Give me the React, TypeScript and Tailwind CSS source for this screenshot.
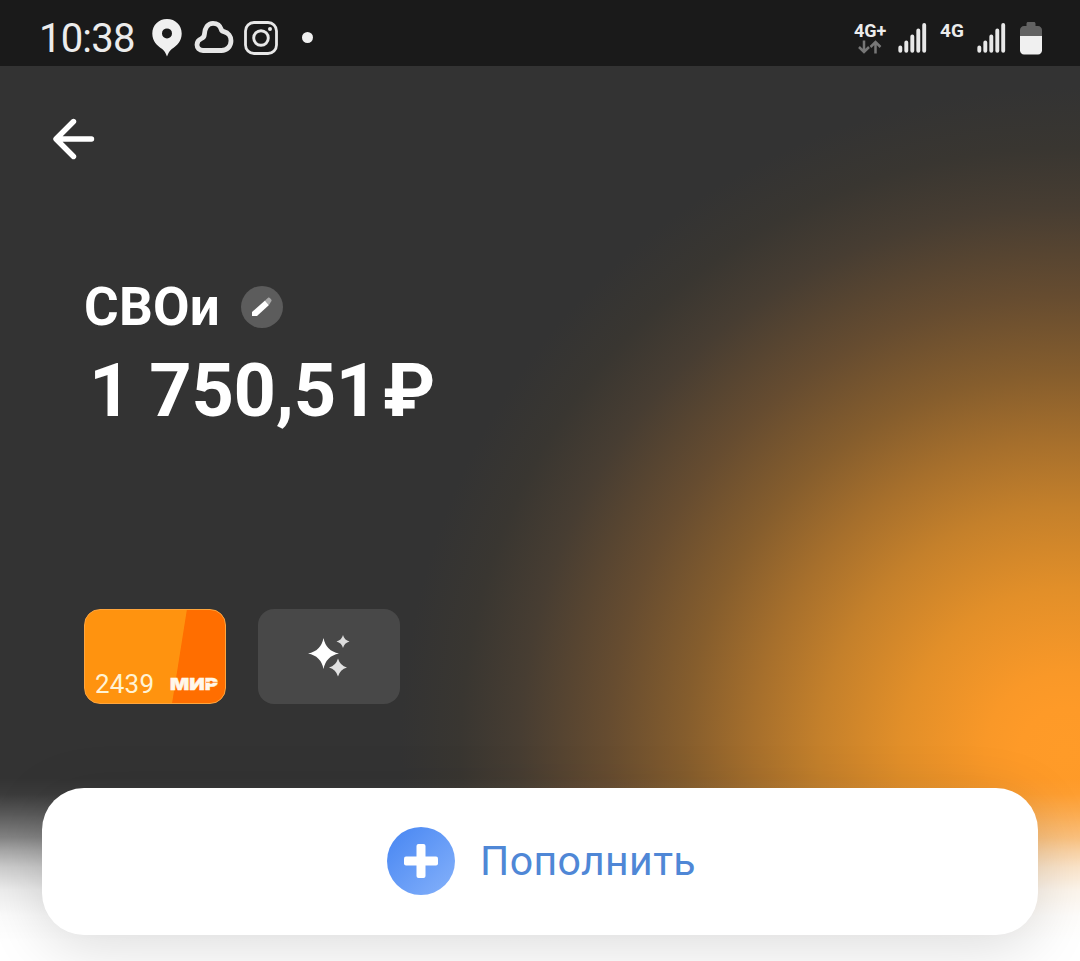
function StatusBar() {
  return (
    <div className="flex h-[66px] items-center justify-between bg-[#1a1a1a] pl-[39px] pr-[38px] text-[#ececec]">
      <div className="flex h-full items-center">
        <span className="mt-[11px] w-[113px] text-[40px] leading-none tracking-[-0.8px]">10:38</span>
        <svg className="mt-[10px]" width="30" height="38" viewBox="0 0 30 38" fill="none">
          <path
            d="M15 0C6.500 0 .3 6.300.3 14.400c0 8 4.900 12.200 9.900 15.600 2.300 1.800 3.300 4 4.800 7.500 1.500-3.500 2.500-5.700 4.800-7.500 5-3.400 9.900-7.600 9.900-15.600C29.700 6.300 23.500 0 15 0Zm0 19.400a5 5 0 1 1 0-10 5 5 0 0 1 0 10Z"
            fill="#f0f0f0"
            fillRule="evenodd"
          />
        </svg>
        <svg className="ml-[12px] mt-[8px]" width="41" height="34" viewBox="0 0 41 34" fill="none">
          <path
            d="M9 30.500C5.200 30.500 3 27.800 3 24.800c0-3 1.700-5.100 4.400-6.200 2.100-.8 2.800-1.900 3-4.200C10.900 7.500 14 3.300 19 3.300c4.300 0 7.200 2.400 8.300 6.200.4 1.400 1.200 1.900 2.600 2.200 4.400 1.100 7.100 4.700 7.100 9.100 0 5.600-4.100 9.700-9.500 9.700H9Z"
            stroke="#e6e6e6"
            strokeWidth="4.800"
            strokeLinejoin="round"
          />
        </svg>
        <svg className="ml-[9px] mt-[10px]" width="34" height="34" viewBox="0 0 34 34" fill="none" stroke="#e8e8e8">
          <rect x="1.500" y="1.500" width="31" height="31" rx="8.500" strokeWidth="2.800" />
          <circle cx="17" cy="17" r="7.300" strokeWidth="2.900" />
          <circle cx="26" cy="8" r="2" fill="#e8e8e8" stroke="none" />
        </svg>
        <span className="ml-[24px] mt-[9px] h-[11px] w-[11px] rounded-full bg-[#f0f0f0]" />
      </div>
      <div className="flex h-full items-start">
        <div className="flex w-[44px] flex-col pt-[22px]">
          <span className="text-[18px] font-bold leading-[18px]">4G+</span>
          <svg className="ml-[4px]" width="24" height="14" viewBox="0 0 24 14" fill="none" stroke="#777" strokeWidth="2.500">
            <path d="M6 0.500v11.500M1 7l5 5 5-5M17.500 13.500V2M12.500 7l5-5 5 5" />
          </svg>
        </div>
        <SignalBars />
        <span className="ml-[13px] mt-[20px] w-[26px] text-[19px] font-bold leading-[21px]">4G</span>
        <SignalBars className="ml-[11px]" />
        <svg className="ml-[14px] mt-[22px]" width="22" height="33" viewBox="0 0 22 33">
          <path d="M6.500 1.500c0-.8.7-1.500 1.500-1.500h6c.8 0 1.500.7 1.500 1.500V4H18c2.200 0 4 1.800 4 4v6.500H0V8c0-2.200 1.800-4 4-4h2.500V1.500Z" fill="#626262" />
          <path d="M0 14h22v14.500c0 2.200-1.800 4-4 4H4c-2.200 0-4-1.800-4-4V14Z" fill="#f0f0f0" />
        </svg>
      </div>
    </div>
  )
}

function SignalBars({ className = "" }: { className?: string }) {
  return (
    <svg className={`mt-[23px] ${className}`} width="29" height="30" viewBox="0 0 29 30" stroke="#e8e8e8" strokeWidth="3.900" strokeLinecap="round">
      <path d="M2.300 24.500v3.200M8.300 19.500v8.200M14.300 13.500v14.200M20.300 7.500v20.200M26.200 2v25.700" />
    </svg>
  )
}

function BankCard() {
  return (
    <div className="flex h-[95px] w-[142px] items-end justify-between rounded-[16px] border border-[#ffa53d] bg-[linear-gradient(99deg,#ff930f_65.500%,#ff6e00_66.100%)] pb-[6px] pl-[10px] pr-[6px]">
      <span className="text-[26px] leading-[26px] tracking-[0.200px] text-[#fff3d5]">2439</span>
      <svg className="overflow-visible" width="49" height="26" viewBox="0 0 49 26">
        <text x="0" y="19" textLength="48" lengthAdjust="spacingAndGlyphs" fontFamily="Inter, sans-serif" fontSize="16.500" fontWeight="900" fill="#fff7ea" stroke="#fff7ea" strokeWidth="0.400">
          МИР
        </text>
        <path d="M36 11.300h12" stroke="#ff7a0a" strokeWidth="0.800" />
      </svg>
    </div>
  )
}

function SparkleTile() {
  return (
    <div className="flex h-[95px] w-[142px] items-center justify-center rounded-[16px] bg-[#484848]">
      <svg className="-mt-[2px]" width="42" height="42" viewBox="0 0 42 42">
        <path d="M15.500 3Q18 16 31 18.500 18 21 15.500 34 13 21 0 18.500 13 16 15.500 3Z" fill="#fff" />
        <path d="M35 0Q36.300 5.200 41.500 6.500 36.300 7.800 35 13 33.700 7.800 28.500 6.500 33.700 5.200 35 0Z" fill="#ddd" />
        <path d="M30 23.500Q32 30.500 39 32.500 32 34.500 30 41.500 28 34.500 21 32.500 28 30.500 30 23.500Z" fill="#e2e2e2" />
      </svg>
    </div>
  )
}

export default function App() {
  return (
    <div className="flex h-[961px] w-[1080px] flex-col overflow-hidden bg-[#333] font-['Roboto',sans-serif] text-white">
      <StatusBar />
      <main className="flex flex-1 flex-col bg-[linear-gradient(to_bottom,rgba(255,255,255,0)_712px,rgba(255,255,255,0.040)_728px,rgba(255,255,255,0.180)_747px,rgba(255,255,255,0.390)_771px,rgba(255,255,255,0.560)_784px,rgba(255,255,255,0.750)_801px,rgba(255,255,255,0.910)_824px,rgba(255,255,255,0.980)_850px,#fff_875px),radial-gradient(circle_at_1065px_687px,#ff9b28_0px,#fe9a28_45px,#f99828_80px,#e28f29_164px,#c4802b_245px,#a66f2c_312px,#855d2d_380px,#664c30_457px,#473d32_545px,#393631_605px,#333_665px)]">
        <svg className="ml-[53px] mt-[52px]" width="42" height="42" viewBox="0 0 42 42" fill="none" stroke="#fff" strokeWidth="5.400" strokeLinecap="round" strokeLinejoin="round">
          <path d="M20.500 3.500 3 21l17.500 17.500M4 21h34.500" />
        </svg>

        <div className="ml-[84px] mt-[120px] flex h-[54px] items-center">
          <h1 className="w-[157px] text-[53px] font-bold leading-[54px] tracking-[0.200px]">СВОи</h1>
          <span className="flex h-[42px] w-[42px] items-center justify-center rounded-full bg-[#5c5c5c]">
            <svg width="22" height="22" viewBox="0 0 22 22">
              <path d="M1 16 14 4.500l4 4.500L6 20H1V16Z" fill="#fff" />
              <path d="m14 4.500 2.800-2.600c.8-.7 1.500-.6 2.100 0l1.300 1.600c.6.8.5 1.500-.1 2.100L18 9 14 4.500Z" fill="#aaa" />
            </svg>
          </span>
        </div>
        <div className="ml-[89px] mt-[18px] text-[74px] font-bold leading-[78px] tracking-[-0.300px]">
          1 750,51<span className="ml-[5px]">₽</span>
        </div>

        <div className="mt-[179px] flex gap-[32px] pl-[84px]">
          <BankCard />
          <SparkleTile />
        </div>

        <button className="mx-[42px] mt-[84px] flex h-[147px] shrink-0 items-center rounded-[42px] bg-white pb-[2px] pl-[345px] shadow-[0_12px_60px_rgba(0,0,0,0.140)]">
          <span className="flex h-[68px] w-[68px] items-center justify-center rounded-full bg-linear-to-br from-[#4685f2] to-[#85b1fa]">
            <svg width="34" height="34" viewBox="0 0 34 34" fill="#fff">
              <rect x="12.500" y="0" width="9" height="34" rx="2" />
              <rect x="0" y="12.500" width="34" height="9" rx="2" />
            </svg>
          </span>
          <span className="ml-[25px] text-[41px] leading-[48px] tracking-[0.400px] text-[#4f87d6]">Пополнить</span>
        </button>
      </main>
    </div>
  )
}
